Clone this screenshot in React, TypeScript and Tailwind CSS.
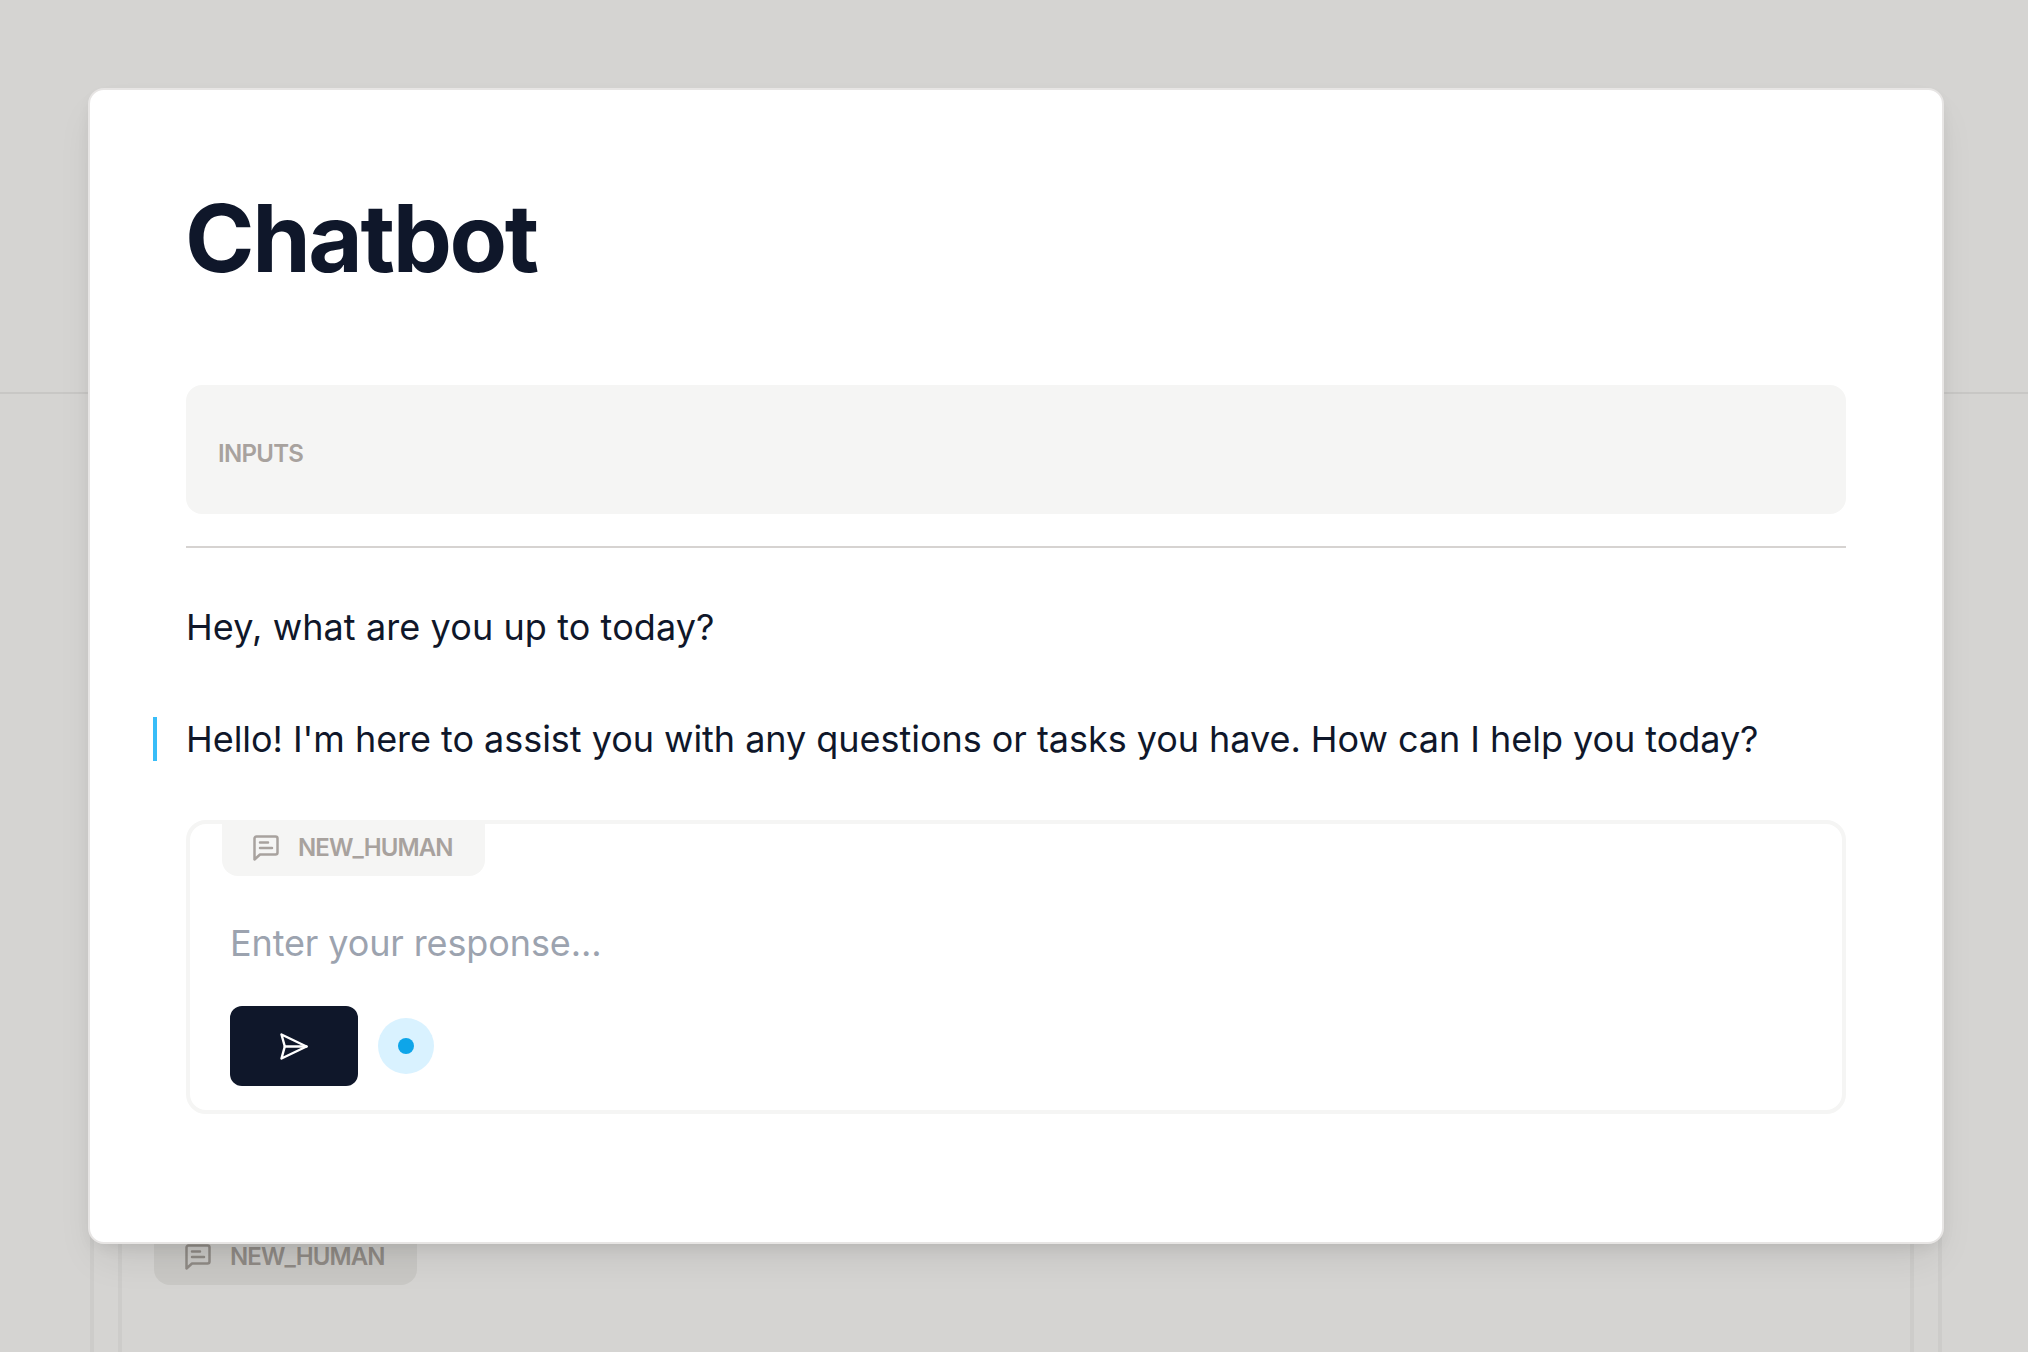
function ChatIcon({ className }: { className: string }) {
  return (
    <svg viewBox="0 0 26 26" fill="none" stroke="currentColor" strokeWidth="2.5" strokeLinejoin="round" strokeLinecap="round" className={className}>
      <path d="M1.5 24.5V3.5a2 2 0 0 1 2-2h19a2 2 0 0 1 2 2v14a2 2 0 0 1-2 2H7l-5.5 5Z" />
      <path d="M7 7.5h8M7 13h12" />
    </svg>
  );
}

function Tab({ tone }: { tone: "front" | "back" }) {
  const front = tone === "front";
  return (
    <div
      className={
        front
          ? "ml-8 flex h-[52px] w-[263px] items-center gap-[19px] rounded-b-[16px] bg-[#f5f5f4] pb-[5px] pl-[31px] text-[#a8a29e]"
          : "ml-8 flex h-[53px] w-[263px] items-center gap-[19px] rounded-b-[16px] bg-[#c9c8c5] pb-[3px] pl-[31px] text-[#8f8a85]"
      }
    >
      <ChatIcon className="size-[26px] shrink-0" />
      <span className="text-[24px] leading-8 font-semibold tracking-[-0.9px]">NEW_HUMAN</span>
    </div>
  );
}

export default function App() {
  return (
    <div className="relative h-[1352px] w-[2028px] overflow-hidden bg-[#d5d4d2] font-['Inter',sans-serif]">
      <div className="h-[394px] border-b-2 border-[#c8c7c5]" />
      <div className="mt-[838px] mr-[86px] ml-[90px] h-[120px] border-x-4 border-[#cdccca] px-6">
        <div className="h-full border-x-4 border-[#cdccca]">
          <Tab tone="back" />
        </div>
      </div>

      <div className="absolute top-[88px] left-[88px] h-[1156px] w-[1856px] rounded-[16px] border-2 border-[#e7e5e4] bg-white px-[96px] pt-[100px] shadow-[0_20px_40px_-10px_rgba(0,0,0,0.1),0_6px_16px_-4px_rgba(0,0,0,0.08)]">
        <h1 className="-ml-px text-[94px] leading-[96px] font-bold tracking-[-2.4px] text-[#0f172a]">
          Chatbot
        </h1>
        <div className="mt-[99px] flex h-[129px] items-center rounded-[16px] bg-[#f5f5f4] px-8 pt-[8px] text-[24px] font-semibold tracking-[-0.7px] text-[#a8a29e]">
          INPUTS
        </div>
        <div className="mt-8 border-t-2 border-[#d6d3d1]" />
        <p className="mt-[57px] text-[36px] leading-[44px] tracking-[0.09px] text-[#0f172a]">Hey, what are you up to today?</p>
        <div className="relative mt-[68px]">
          <div className="absolute top-0 -left-[33px] h-[44px] w-1 bg-[#38bdf8]" />
          <p className="text-[36px] leading-[44px] tracking-[-0.04px] text-[#0f172a]">
            Hello! I'm here to assist you with any questions or tasks you have. How can I help you today?
          </p>
        </div>
        <div className="mt-[59px] h-[294px] rounded-[20px] border-4 border-[#f5f5f4]">
          <Tab tone="front" />
          <p className="mt-[45px] pl-10 text-[36px] leading-[44px] tracking-[-0.12px] text-[#9ca3af]">Enter your response...</p>
          <div className="mt-[41px] flex items-center gap-5 pl-10">
            <button className="flex h-20 w-32 items-center justify-center rounded-[12px] bg-[#0f172a] text-white">
              <svg viewBox="0 0 28 27" fill="none" stroke="currentColor" strokeWidth="2.4" strokeLinejoin="round" strokeLinecap="round" className="h-[27px] w-7">
                <path d="M1.5 1.5 26.5 13.5 1.5 25.5 4.8 13.5Z" />
                <path d="M4.8 13.5H26.5" />
              </svg>
            </button>
            <div className="flex size-14 items-center justify-center rounded-full bg-[#d9f2ff]">
              <div className="size-4 rounded-full bg-[#0ea5e9]" />
            </div>
          </div>
        </div>
      </div>
    </div>
  );
}
